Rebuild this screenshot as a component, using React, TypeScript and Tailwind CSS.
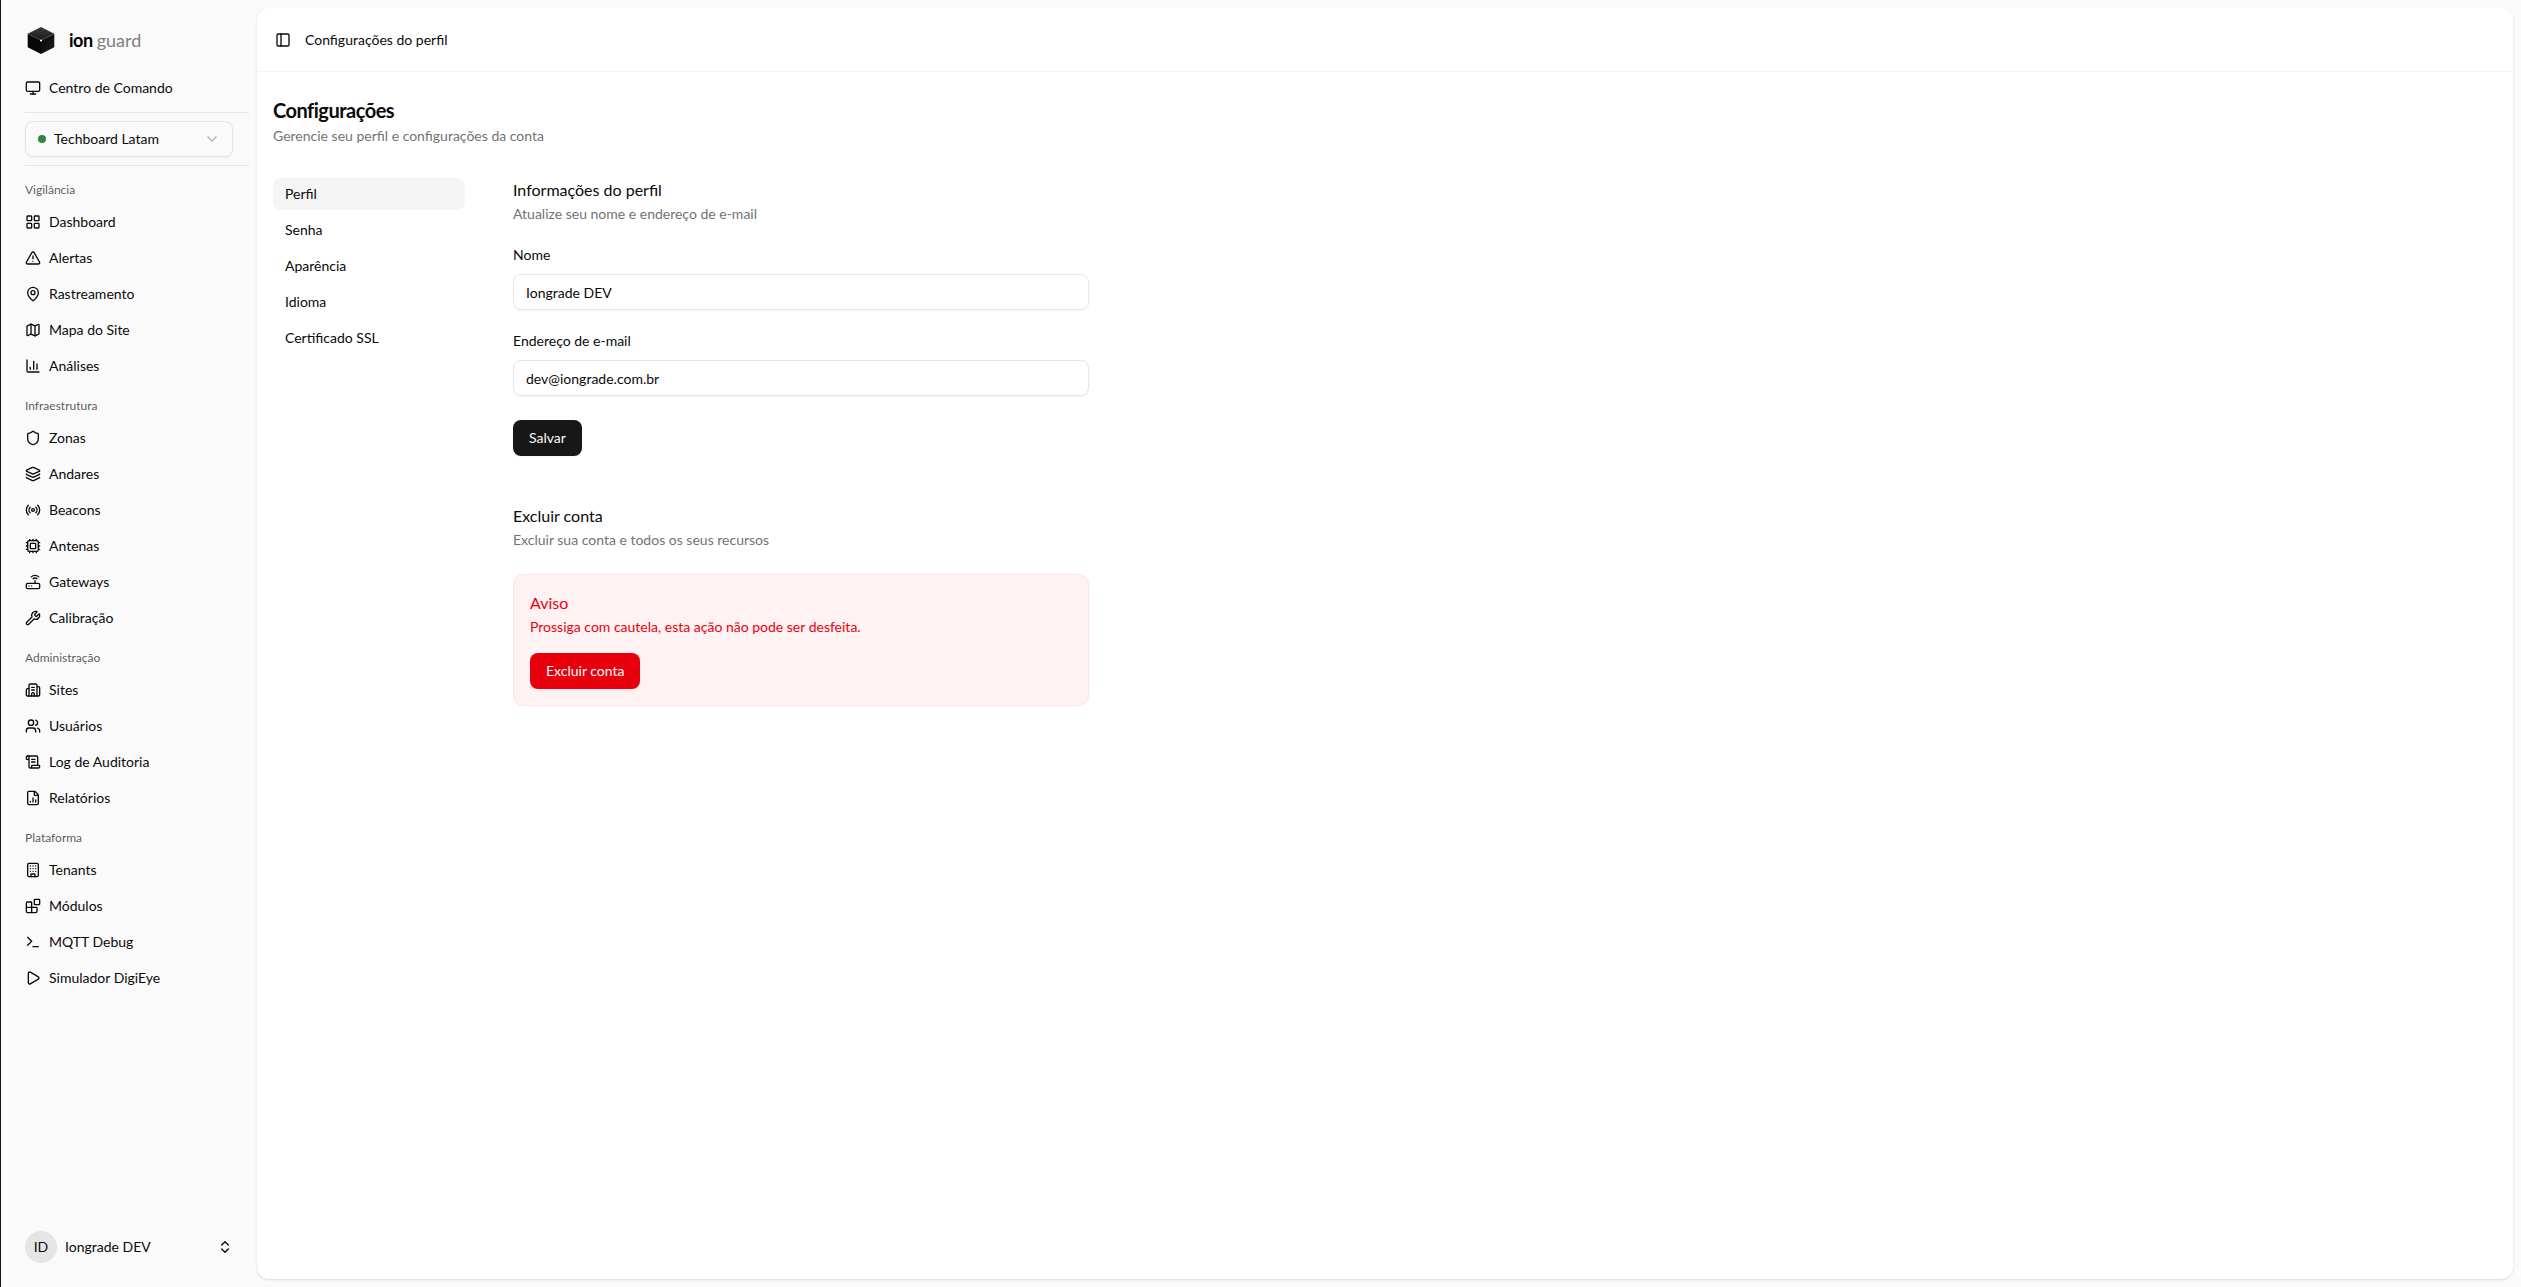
import React from "react";
import {
  Blocks,
  Building,
  ChartColumn,
  ChevronDown,
  ChevronsUpDown,
  Cpu,
  FileChartColumn,
  Layers,
  LayoutGrid,
  Map,
  MapPin,
  Monitor,
  PanelLeft,
  Play,
  Radio,
  Router,
  ScrollText,
  Shield,
  Terminal,
  TriangleAlert,
  Users,
  Wrench,
  type LucideIcon,
} from "lucide-react";

type NavItem = { title: string; icon: LucideIcon | typeof SitesIcon };

// Tall building with a lower wing on each side
function SitesIcon({ className }: { className?: string }) {
  return (
    <svg
      className={className}
      viewBox="0 0 24 24"
      fill="none"
      stroke="currentColor"
      strokeWidth="2"
      strokeLinecap="round"
      strokeLinejoin="round"
    >
      <path d="M10 12h4" />
      <path d="M10 8h4" />
      <path d="M14 21v-3a2 2 0 0 0-4 0v3" />
      <path d="M6 10H4a2 2 0 0 0-2 2v7a2 2 0 0 0 2 2h16a2 2 0 0 0 2-2V9a2 2 0 0 0-2-2h-2" />
      <path d="M6 21V5a2 2 0 0 1 2-2h8a2 2 0 0 1 2 2v16" />
    </svg>
  );
}

const groups: { label: string; items: NavItem[] }[] = [
  {
    label: "Vigilância",
    items: [
      { title: "Dashboard", icon: LayoutGrid },
      { title: "Alertas", icon: TriangleAlert },
      { title: "Rastreamento", icon: MapPin },
      { title: "Mapa do Site", icon: Map },
      { title: "Análises", icon: ChartColumn },
    ],
  },
  {
    label: "Infraestrutura",
    items: [
      { title: "Zonas", icon: Shield },
      { title: "Andares", icon: Layers },
      { title: "Beacons", icon: Radio },
      { title: "Antenas", icon: Cpu },
      { title: "Gateways", icon: Router },
      { title: "Calibração", icon: Wrench },
    ],
  },
  {
    label: "Administração",
    items: [
      { title: "Sites", icon: SitesIcon },
      { title: "Usuários", icon: Users },
      { title: "Log de Auditoria", icon: ScrollText },
      { title: "Relatórios", icon: FileChartColumn },
    ],
  },
  {
    label: "Plataforma",
    items: [
      { title: "Tenants", icon: Building },
      { title: "Módulos", icon: Blocks },
      { title: "MQTT Debug", icon: Terminal },
      { title: "Simulador DigiEye", icon: Play },
    ],
  },
];

const settingsTabs = ["Perfil", "Senha", "Aparência", "Idioma", "Certificado SSL"];

const Logo = () => (
  <a href="#" className="flex h-12 items-center gap-3">
    <svg viewBox="0 0 32 32" className="size-8">
      <defs>
        <linearGradient id="top" x1="0" y1="0" x2="0" y2="1">
          <stop offset="0" stopColor="#3a3a3a" />
          <stop offset="1" stopColor="#1c1c1c" />
        </linearGradient>
        <linearGradient id="right" x1="0" y1="0" x2="1" y2="1">
          <stop offset="0" stopColor="#060606" />
          <stop offset="1" stopColor="#202020" />
        </linearGradient>
      </defs>
      <path d="M16 3 29.3 9.7 16 16.5 2.7 9.7Z" fill="url(#top)" />
      <path d="M2.7 9.7 16 16.5V30L2.7 23.2Z" fill="#070707" />
      <path d="M29.3 9.7 16 16.5V30l13.3-6.8Z" fill="url(#right)" />
      <path d="M2.7 9.7 16 16.5l13.3-6.8" fill="none" stroke="#666" strokeWidth=".5" strokeDasharray="1 1" />
      <circle cx="16" cy="16.5" r="1.1" fill="#fff" />
    </svg>
    <span className="flex gap-1 text-lg">
      <span className="font-bold tracking-tight text-black">ion</span>
      <span className="text-[#808080]">guard</span>
    </span>
  </a>
);

const NavLink = ({ title, icon: Icon }: NavItem) => (
  <a href="#" className="flex h-8 items-center gap-2 rounded-lg text-sm hover:bg-neutral-100">
    <Icon className="size-4 shrink-0" />
    <span>{title}</span>
  </a>
);

const Sidebar = () => (
  <aside className="flex w-64 shrink-0 flex-col py-4 pl-6 pr-2">
    <Logo />
    <div className="mt-2">
      <NavLink title="Centro de Comando" icon={Monitor} />
    </div>

    {/* Tenant switcher */}
    <div className="my-2 border-y border-neutral-200 py-2">
      <div className="mr-4 flex h-9 items-center gap-2 rounded-lg border border-neutral-200 px-3 text-sm shadow-xs">
        <span className="size-2 rounded-full bg-[#2b8a3e]" />
        <select aria-label="Tenant" className="flex-1 appearance-none bg-transparent outline-none">
          <option>Techboard Latam</option>
        </select>
        <ChevronDown className="size-4 text-neutral-500 opacity-50" />
      </div>
    </div>

    <nav className="flex flex-col gap-2">
      {groups.map((group) => (
        <div key={group.label}>
          <div className="flex h-8 items-center text-xs text-neutral-950/70">{group.label}</div>
          <div className="flex flex-col gap-1">
            {group.items.map((item) => (
              <NavLink key={item.title} {...item} />
            ))}
          </div>
        </div>
      ))}
    </nav>

    <button className="mb-2 mr-4 mt-auto flex h-8 items-center gap-2 text-left text-sm">
      <span className="flex size-8 items-center justify-center rounded-full bg-neutral-200">ID</span>
      <span className="flex-1">Iongrade DEV</span>
      <ChevronsUpDown className="size-4" />
    </button>
  </aside>
);

const SectionHeading = ({ title, description }: { title: string; description: string }) => (
  <header>
    <h3 className="mb-0.5 text-base">{title}</h3>
    <p className="text-sm text-neutral-500">{description}</p>
  </header>
);

const Field = ({ id, label, type, value }: { id: string; label: string; type: string; value: string }) => (
  <div className="grid gap-3">
    <label htmlFor={id} className="text-sm leading-none">
      {label}
    </label>
    <input
      id={id}
      type={type}
      defaultValue={value}
      className="h-9 w-full rounded-lg border border-neutral-200 px-3 text-sm shadow-xs outline-none"
    />
  </div>
);

export default function App() {
  return (
    <div className="flex min-h-screen border-l border-neutral-900 bg-neutral-50 font-['Lato',sans-serif] text-neutral-950">
      <Sidebar />

      <main className="my-2 mr-2 flex-1 rounded-xl bg-white shadow-sm">
        <header className="flex h-16 items-center gap-2 border-b border-neutral-100 px-4">
          <button aria-label="Alternar menu" className="-ml-1 flex size-7 items-center justify-center">
            <PanelLeft className="size-4" />
          </button>
          <span className="text-sm">Configurações do perfil</span>
        </header>

        <div className="px-4 py-6">
          <div className="mb-8">
            <h2 className="mb-0.5 text-xl font-bold tracking-tight">Configurações</h2>
            <p className="text-sm text-neutral-500">Gerencie seu perfil e configurações da conta</p>
          </div>

          <div className="flex gap-12">
            <nav className="flex w-48 shrink-0 flex-col gap-1">
              {settingsTabs.map((tab) => (
                <a
                  key={tab}
                  href="#"
                  className={`flex h-8 items-center rounded-lg px-3 text-sm ${tab === "Perfil" ? "bg-neutral-100" : ""}`}
                >
                  {tab}
                </a>
              ))}
            </nav>

            <div className="flex max-w-xl flex-1 flex-col gap-12">
              <form className="flex flex-col gap-6" onSubmit={(e) => e.preventDefault()}>
                <SectionHeading title="Informações do perfil" description="Atualize seu nome e endereço de e-mail" />
                <Field id="name" label="Nome" type="text" value="Iongrade DEV" />
                <Field id="email" label="Endereço de e-mail" type="email" value="dev@iongrade.com.br" />
                <button className="h-9 self-start rounded-lg bg-neutral-900 px-4 text-sm text-neutral-50 shadow-xs">
                  Salvar
                </button>
              </form>

              {/* Danger zone */}
              <section className="flex flex-col gap-6">
                <SectionHeading title="Excluir conta" description="Excluir sua conta e todos os seus recursos" />
                <div className="rounded-[10px] border border-red-100 bg-red-50 p-4 text-red-600">
                  <p className="mb-0.5 text-base">Aviso</p>
                  <p className="mb-4 text-sm">Prossiga com cautela, esta ação não pode ser desfeita.</p>
                  <button className="h-9 rounded-lg bg-red-600 px-4 text-sm text-white shadow-xs">Excluir conta</button>
                </div>
              </section>
            </div>
          </div>
        </div>
      </main>
    </div>
  );
}
